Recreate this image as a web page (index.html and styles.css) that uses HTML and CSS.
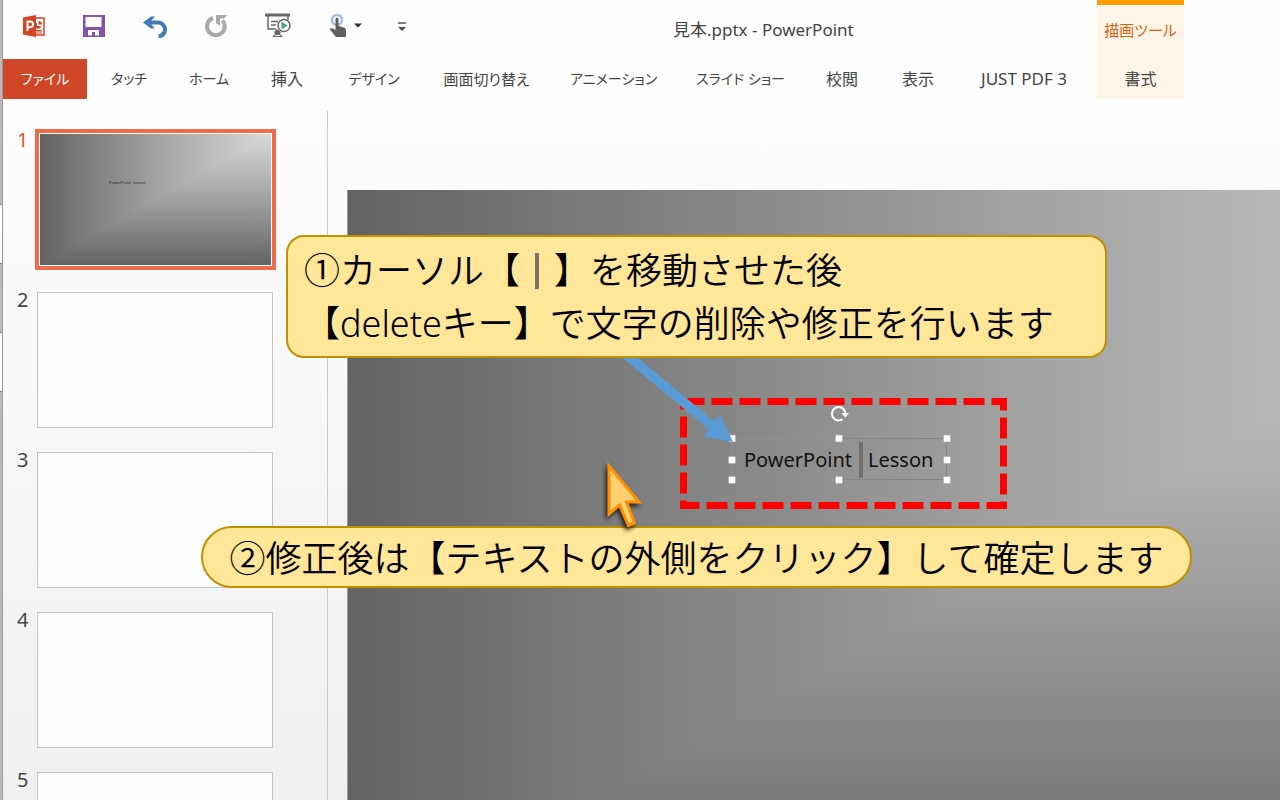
FILE: index.html
```html
<!DOCTYPE html>
<html lang="ja">
<head>
<meta charset="utf-8">
<title>見本.pptx - PowerPoint</title>
<link rel="stylesheet" href="styles.css">
</head>
<body>
<div class="app">
  <div class="edge"><span class="edge-box"></span><span class="edge-box"></span></div>
  <div class="window">
    <header class="ribbon">
      <div class="titlebar">
        <div class="quick">
          <svg class="logo" width="24" height="24" viewBox="0 0 24 24" aria-hidden="true">
            <path d="M12 4h10v17H12" fill="#fff" stroke="#d04423" stroke-width="1.5"/>
            <path d="M15 9a3 3 0 1 0 4 3h-4z" fill="#d04423"/><path d="M16.500 7v3.500H20A3.500 3.500 0 0 0 16.500 7zM14 16h6v1.500h-6zM14 18.500h6v1h-6z" fill="#d04423"/>
            <path d="M1 3.500 14 1v22L1 20.500z" fill="#d04423"/>
            <path d="M5.500 17V7.500h2.700a2.800 2.800 0 0 1 0 5.700H5.500" fill="none" stroke="#fff" stroke-width="2"/>
          </svg>
          <button class="tool" aria-label="上書き保存"><svg width="24" height="24" viewBox="0 0 24 24"><path d="M1 1h22v22h-22z" fill="#8453a8"/><path d="M3.500 3h16v10h-16zM6 16h11v5.500h-4V18h-3v3.500H6z" fill="#fdfdfd"/></svg></button>
          <button class="tool" aria-label="元に戻す"><svg width="26" height="24" viewBox="0 0 26 24"><path d="M4 8.500h11.500a7 7 0 0 1 1 14" fill="none" stroke="#4379b4" stroke-width="4"/><path d="M1 8.500 9 2.500h4L7.500 8.500l5.500 6H9z" fill="#4379b4"/></svg></button>
          <button class="tool" aria-label="繰り返し"><svg width="24" height="24" viewBox="0 0 24 24"><path d="M9 4A8.800 8.800 0 1 0 18.500 6.500" fill="none" stroke="#a9a7a9" stroke-width="4"/><path d="M12 1H23.500l-3.500 3.500h-4V12L12 9z" fill="#a9a7a9"/></svg></button>
          <button class="tool" aria-label="スライドショー"><svg width="28" height="26" viewBox="0 0 28 26"><path d="M1 2h25" stroke="#666" stroke-width="3"/><path d="M4 3v13h8M24 3v4M7 8.500h7M7 12h5" fill="none" stroke="#666" stroke-width="1.500"/><path d="M13 16l4 3-1 2 3 3H8l3-3-1-2z" fill="#666"/><path d="M11 22.500h5" stroke="#fff"/><circle cx="20" cy="12.500" r="6" fill="#fff" stroke="#666" stroke-width="1.500"/><path d="M17.500 8.500v8l6-4z" fill="#3ea385"/></svg></button>
          <button class="tool" aria-label="タッチ/マウス モードの切り替え"><svg width="34" height="26" viewBox="0 0 34 26"><circle cx="9" cy="7" r="5" fill="#fff" stroke="#9dbfe2" stroke-width="2.500"/><path d="M7.500 6a1.500 1.500 0 0 1 3 0v7l5.500 1.500q2 .5 2 3V24H8L1.500 16q2-2 6 1z" fill="#5f5f5f"/><path d="M26 10.500h8l-4 4z" fill="#333"/></svg></button>
          <button class="tool" aria-label="クイック アクセス ツール バーのユーザー設定"><svg width="8" height="10" viewBox="0 0 8 10"><path d="M0 2h8" stroke="#555" stroke-width="1.500"/><path d="M0 6h8L4 10z" fill="#555"/></svg></button>
        </div>
        <h1 class="title">見本.pptx - PowerPoint</h1>
      </div>
      <nav class="tabs">
        <button class="tab kana file">ファイル</button>
        <button class="tab kana">タッチ</button>
        <button class="tab kana">ホーム</button>
        <button class="tab short">挿入</button>
        <button class="tab kana medium">デザイン</button>
        <button class="tab mixed wide">画面切り替え</button>
        <button class="tab kana wide">アニメーション</button>
        <button class="tab kana wide">スライド ショー</button>
        <button class="tab short">校閲</button>
        <button class="tab short">表示</button>
        <button class="tab latin last">JUST PDF 3</button>
      </nav>
      <div class="context">
        <span class="context-name">描画ツール</span>
        <button class="tab context-tab">書式</button>
      </div>
    </header>
    <main class="work">
      <ol class="pane">
        <li class="item current"><span class="num">1</span><button class="thumb shade" aria-label="スライド 1"><span class="tiny">PowerPoint &nbsp;Lesson</span></button></li>
        <li class="item"><span class="num">2</span><button class="thumb" aria-label="スライド 2"></button></li>
        <li class="item"><span class="num">3</span><button class="thumb" aria-label="スライド 3"></button></li>
        <li class="item"><span class="num">4</span><button class="thumb" aria-label="スライド 4"></button></li>
        <li class="item"><span class="num">5</span><button class="thumb" aria-label="スライド 5"></button></li>
      </ol>
      <section class="stage">
        <div class="slide shade">
          <div class="textbox"><span>PowerPoint</span><i class="caret"></i><span>Lesson</span></div>
        </div>
      </section>
    </main>
  </div>

  <svg class="marks" aria-hidden="true">
    <path d="M683.500 401.500H1003.500V505.500H683.500Z" fill="none" stroke="#f00" stroke-width="7" stroke-dasharray="21 7"/>
    <path d="M732.500 438.500H947M732.500 480H947M732.500 438.500V480" fill="none" stroke="#969696" stroke-dasharray="2 2"/>
    <path d="M840 438.500H946.500V479.500H840" fill="none" stroke="#868686"/>
    <g fill="#fff" stroke="#aaa" stroke-width=".6">
      <rect x="728.500" y="435" width="7" height="7" rx="1"/><rect x="835.500" y="435" width="7" height="7" rx="1"/><rect x="943.500" y="435" width="7" height="7" rx="1"/>
      <rect x="728.500" y="456.500" width="7" height="7" rx="1"/><rect x="943.500" y="456.500" width="7" height="7" rx="1"/>
      <rect x="728.500" y="476.500" width="7" height="7" rx="1"/><rect x="835.500" y="476.500" width="7" height="7" rx="1"/><rect x="943.500" y="476.500" width="7" height="7" rx="1"/>
    </g>
    <path d="M842.500 419.200A6.700 6.700 0 1 1 845.300 413" fill="none" stroke="#fff" stroke-width="2"/>
    <path d="M841.500 413h7.500l-3.700 4.500z" fill="#fff"/>
    <path d="M613 350 627 349 714 421 721 415.500 733 442 703.500 436.500 709 429.500Z" fill="#5b9bd5"/>
  </svg>

  <p class="note note-a">①カーソル【<i class="bar"></i>】を移動させた後<br>【deleteキー】で文字の削除や修正を行います</p>
  <p class="note note-b">②修正後は【テキストの外側をクリック】して確定します</p>

  <svg class="pointer" width="40" height="72" viewBox="0 0 40 72" aria-hidden="true">
    <path d="M5 6V54L15.500 45 24.500 65.500 30.500 63 22.500 42H35Z" fill="#ffcf70" stroke="#ff9000" stroke-width="3"/>
  </svg>
</div>
</body>
</html>
```
FILE: styles.css
```css
* { box-sizing: border-box; }

body {
  margin: 0;
  overflow: hidden;
  font-family: "Noto Sans", "Noto Sans CJK JP", sans-serif;
  color: #444;
}

button {
  margin: 0;
  padding: 0;
  border: 0;
  background: none;
  font: inherit;
  color: inherit;
}

.app {
  position: relative;
  display: flex;
  height: 100vh;
  overflow: hidden;
  background: linear-gradient(#fdfdfd 110px, #f0f0f0);
}

/* sliver of the window behind */
.edge {
  flex: none;
  display: flex;
  flex-direction: column;
  gap: 68px;
  width: 3px;
  padding-top: 204px;
  background: #bbb;
  border-right: 1px solid #999;
}

.edge-box {
  height: 60px;
  background: #fff;
  border: solid #777;
  border-width: 1px 0;
}

.window {
  flex: 1;
  min-width: 0;
  display: flex;
  flex-direction: column;
}

.ribbon {
  position: relative;
  flex: none;
  height: 111px;
  background: #fdfdfd;
}

.titlebar {
  display: flex;
  align-items: center;
  height: 59px;
}

.quick {
  display: flex;
  align-items: center;
  width: 670px;
  padding: 0 0 8px 19px;
  gap: 36px;
}

.logo, .tool svg { display: block; }

.title {
  margin: 0;
  font-size: 17px;
  line-height: 24px;
  font-weight: 400;
  white-space: nowrap;
  font-feature-settings: "palt";
}

.tabs {
  display: flex;
  height: 40px;
}

.tab {
  flex: none;
  width: 80px;
  font-size: 16px;
  line-height: 24px;
  white-space: nowrap;
  font-feature-settings: "palt";
}

.tab.kana { font-size: 14px; }
.tab.mixed { font-size: 15px; }
.tab.latin { font-size: 17px; }
.tab.short { width: 76px; }
.tab.medium { width: 98px; }
.tab.wide { width: 127px; }
.tab.last { width: 136px; }

.tab.file {
  width: 84px;
  margin-right: 2px;
  background: #d04727;
  color: #fff;
}

.context {
  position: absolute;
  top: 0;
  right: 96px;
  display: flex;
  flex-direction: column;
  align-items: center;
  width: 87px;
  height: 99px;
  padding-top: 13px;
  border-top: 5px solid #ff9b00;
  background: #fef5e9;
}

.context-name {
  font-size: 15px;
  line-height: 24px;
  color: #d8600d;
  white-space: nowrap;
  font-feature-settings: "palt";
}

.context-tab { margin-top: 25px; }

.work {
  flex: 1;
  min-height: 0;
  display: flex;
}

.pane {
  flex: none;
  width: 325px;
  margin: 0;
  padding: 21px 0 0 14px;
  list-style: none;
  border-right: 1px solid #ccc;
  overflow: hidden;
}

.item {
  display: flex;
  align-items: flex-start;
  gap: 8px;
  height: 160px;
}

.num {
  width: 12px;
  font-size: 20px;
  line-height: 16px;
}

.thumb {
  width: 236px;
  height: 136px;
  background: #fdfdfd;
  border: 1px solid #c3c3c3;
}

.current .num { color: #d9532f; }

.shade {
  background:
    linear-gradient(to left, #d9d9d9, #a2a2a2 50%, #636363),
    linear-gradient(#d9d9d9, #a2a2a2 50%, #636363);
  background-blend-mode: darken;
}

.thumb.shade {
  display: flex;
  justify-content: flex-start;
  width: 233px;
  height: 133px;
  margin: 1px 0 0 2px;
  padding: 46px 0 0 69px;
  border: 1px solid #fff;
  outline: 4px solid #f06b4b;
}

.tiny {
  font-size: 4px;
  line-height: 6px;
  color: #222;
}

.stage {
  flex: 1;
  min-width: 0;
  padding: 79px 0 0 19px;
  overflow: hidden;
}

.slide {
  position: relative;
  width: 1334px;
  aspect-ratio: 16 / 9;
  border: solid #999;
  border-width: 0 0 0 1px;
}

.textbox {
  position: absolute;
  left: 396px;
  top: 252px;
  display: flex;
  align-items: center;
  font-size: 20px;
  line-height: 36px;
  color: #111;
}

.caret {
  width: 4px;
  height: 36px;
  margin: 0 5px 0 7px;
  background: #767171;
}

.marks {
  position: absolute;
  left: 0;
  top: 0;
  width: 100%;
  height: 100%;
}

.note {
  position: absolute;
  margin: 0;
  border: 2px solid #bf9000;
  background: #ffe699;
  color: #000;
  font-size: 36px;
  font-weight: 350;
  white-space: nowrap;
}

.note-a {
  left: 286px;
  top: 235px;
  width: 821px;
  padding: 7px 16px 6px;
  border-radius: 18px;
  line-height: 53px;
}

.note-b {
  left: 201px;
  top: 526px;
  width: 991px;
  padding-top: 4px;
  border-radius: 31px;
  line-height: 54px;
  text-align: center;
}

.bar {
  display: inline-block;
  width: 4px;
  height: 36px;
  margin: 0 15px;
  background: #767171;
  vertical-align: -5px;
}

.pointer {
  position: absolute;
  left: 604px;
  top: 460px;
  filter: drop-shadow(-2px 3px 2px #222);
}
```
